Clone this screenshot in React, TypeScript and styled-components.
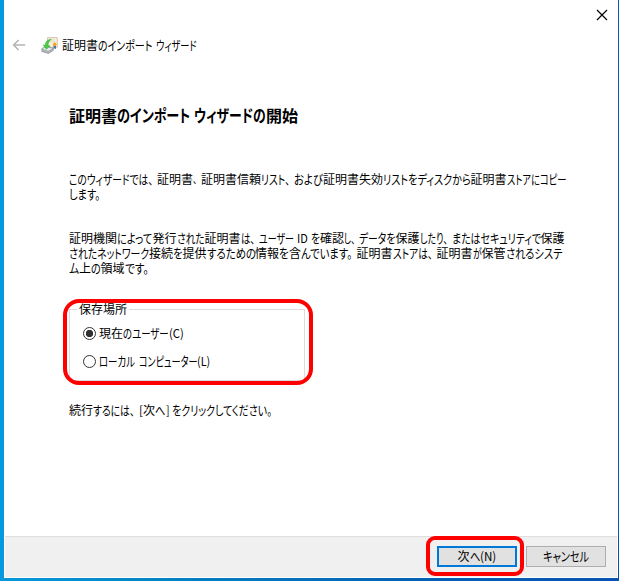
import React, { useLayoutEffect, useRef, useState } from 'react';
import styled, { createGlobalStyle } from 'styled-components';

const GlobalStyle = createGlobalStyle`
  * { box-sizing: border-box; }
  html, body { margin: 0; padding: 0; overflow: hidden; }
  body {
    font-family: "Noto Sans CJK JP", "Noto Sans", sans-serif;
    font-size: 12px;
    line-height: 15px;
    color: #000;
    font-feature-settings: "palt" 1;
  }
`;

const Desktop = styled.div`
  width: 619px;
  height: 581px;
  padding: 0 1px 3px 4px;
  background: linear-gradient(90deg, #0699dd 0%, #0488c8 20%, #0563b4 65%, #0852b4 100%);
`;
const Window = styled.main`
  height: 578px;
  display: flex;
  flex-direction: column;
  background: #fff;
`;
const TitleBar = styled.header`
  position: relative;
  display: flex;
  align-items: center;
  height: 54px;
  padding: 36px 0 0 8px;
`;
const CloseButton = styled.button`
  position: absolute;
  top: 9px;
  right: 10px;
  width: 12px;
  height: 12px;
  padding: 0;
  border: 0;
  background: none;
  svg { display: block; }
`;
const BackIcon = styled.svg`
  width: 14px;
  height: 14px;
  margin-right: 15px;
`;
const CertIcon = styled.svg`
  width: 17px;
  height: 17px;
  margin-right: 4px;
`;
const Content = styled.section`
  flex: 1;
  padding: 0 0 0 65px;
`;
const Heading = styled.h1`
  margin: 51px 0 0;
  height: 22px;
  font-size: 16px;
  line-height: 22px;
  font-weight: 700;
`;
const Paragraph = styled.div<{ $gap: number }>`
  margin-top: ${p => p.$gap}px;
`;
const Line = styled.div`
  display: flex;
  white-space: pre;
  margin: -1px 0 1px;
`;
const RunBox = styled.span<{ $w: number }>`
  flex: none;
  display: block;
  width: ${p => p.$w}px;
  height: 1.25em;
  white-space: pre;
`;
const RunInner = styled.span<{ $kana: boolean }>`
  display: inline-block;
  vertical-align: baseline;
  font-size: ${p => (p.$kana ? '1.07em' : '1em')};
  transform-origin: 0 50%;
`;
const GroupBox = styled.fieldset`
  position: relative;
  width: 236px;
  height: 72px;
  margin: 34px 0 0;
  padding: 16px 0 0 14px;
  border: 1px solid #dcdcdc;
  min-width: 0;
`;
const GroupLabel = styled.div`
  position: absolute;
  top: -8px;
  left: 7px;
  padding: 0 2px;
  background: #fff;
`;
const RadioRow = styled.label`
  display: flex;
  align-items: center;
  height: 15px;
  margin-bottom: 13px;
`;
const RadioMark = styled.span<{ $checked?: boolean }>`
  width: 13px;
  height: 13px;
  margin: 0 3px 0 -1px;
  border: 1px solid #333;
  border-radius: 50%;
  background: ${p => (p.$checked ? 'radial-gradient(circle, #303030 0 3.4px, #fff 4px)' : '#fff')};
`;
const Highlight = styled.div<{ $x: number; $y: number; $w: number; $h: number; $r: number }>`
  position: absolute;
  left: ${p => p.$x}px;
  top: ${p => p.$y}px;
  width: ${p => p.$w}px;
  height: ${p => p.$h}px;
  border: 4px solid #f00;
  border-radius: ${p => p.$r}px;
  pointer-events: none;
`;
const Footer = styled.footer`
  position: relative;
  display: flex;
  justify-content: flex-end;
  gap: 9px;
  height: 41px;
  margin: 0 1px 1px;
  padding: 9px 11px 0 0;
  border-top: 1px solid #dfdfdf;
  background: #f0f0f0;
`;
const PushButton = styled.button<{ $primary?: boolean }>`
  display: flex;
  justify-content: center;
  align-items: center;
  width: 80px;
  height: 21px;
  padding: 0;
  font: inherit;
  color: #000;
  border: ${p => (p.$primary ? '2px solid #0078d7' : '1px solid #adadad')};
  background: #e1e1e1;
`;

type Segment = [text: string, width: number];

const PUNCTUATION_GAP = 4;

// Condenses or widens a run of glyphs to a fixed advance width.
// A run that ends in a comma or full stop keeps a small gap after it.
function Run({ text, width }: { text: string; width: number }) {
  const ref = useRef<HTMLSpanElement>(null);
  const [scale, setScale] = useState(1);
  const inkWidth = /[、。]$/.test(text) ? width - PUNCTUATION_GAP : width;
  useLayoutEffect(() => {
    if (ref.current) setScale(inkWidth / ref.current.offsetWidth);
  }, [text, inkWidth]);
  return (
    <RunBox $w={width}>
      <RunInner ref={ref} $kana={/^[\u3041-\u30ff]/.test(text)} style={{ transform: `scaleX(${scale})` }}>
        {text}
      </RunInner>
    </RunBox>
  );
}

function TextLine({ segments }: { segments: Segment[] }) {
  return (
    <Line>
      {segments.map(([text, width], i) => <Run key={i} text={text} width={width} />)}
    </Line>
  );
}

const intro: Segment[][] = [
  [['このウィザードでは、', 88], ['証明書', 36], ['、', 8], ['証明書信頼', 60], ['リスト、', 33], ['および', 29],
    ['証明書失効', 60], ['リストをディスクから', 87.5], ['証明書', 36], ['ストアにコピー', 59]],
  [['します。', 35]],
];
const details: Segment[][] = [
  [['証明機関', 48], ['によって', 35.5], ['発行', 24], ['された', 28], ['証明書', 36], ['は、', 18], ['ユーザー', 35],
    [' ', 3.5], ['ID', 11], [' ', 3], ['を', 9], ['確認', 24], ['し、', 15], ['データを', 36.5], ['保護', 24],
    ['したり、', 32], ['またはセキュリティで', 89], ['保護', 24]],
  [['されたネットワーク', 80], ['接続', 24], ['を', 9.5], ['提供', 24], ['するための', 48.5], ['情報', 24], ['を', 10],
    ['含', 12], ['んでいます。', 55.5], ['証明書', 36], ['ストアは、', 44], ['証明書', 36], ['が', 9], ['保管', 24], ['されるシステ', 56.5]],
  [['ム', 10], ['上', 12], ['の', 9.5], ['領域', 24], ['です。', 28]],
];

export default function App() {
  return (
    <>
      <GlobalStyle />
      <Desktop>
        <Window>
          <TitleBar>
            <BackIcon viewBox="0 0 14 14" fill="none" stroke="#b4b4b4" strokeWidth="1.5">
              <path d="M13.2 7H1.6M6.6 2 1.6 7l5 5" />
            </BackIcon>
            <CertIcon viewBox="0 0 17 17">
              <path d="M6.5.7h9.8v9.6H6.5z" fill="#f7f1df" stroke="#d2bb9c" strokeWidth=".9" />
              <path d="M8.2 3h6M9 4.8h5" stroke="#ddd6ca" strokeWidth=".8" />
              <path d="M12.5 8.3v4l1.2-1 1.3 1v-4z" fill="#3b75c4" />
              <circle cx="13.7" cy="7.4" r="1.8" fill="#f3a51d" />
              <path d="m.8 11.6 4.4-2.3 7.2 1.9v2.2l-5 3.1-6.6-2z" fill="#aeb2b5" stroke="#858a8e" strokeWidth=".6" />
              <path d="m1.7 11.8 3.7-1.7 5.7 1.4-3.9 2.2z" fill="#e9ecec" />
              <path d="M10.2 2.3C6.7 2.6 4.4 4.8 4.4 8H2.2l3.2 4.2L9.2 9 7 8.6c0-2.2 1-4.3 3.2-6.3z" fill="#4ccc46" stroke="#32a939" strokeWidth=".5" />
            </CertIcon>
            <TextLine segments={[['証明書', 36], ['のインポート', 54.5], [' ', 3], ['ウィザード', 41]]} />
            <CloseButton aria-label="閉じる">
              <svg width="12" height="12" viewBox="0 0 12 12" stroke="#000" strokeWidth="1.2">
                <path d="m1 1 10 10M11 1 1 11" />
              </svg>
            </CloseButton>
          </TitleBar>
          <Content>
            <Heading>
              <TextLine segments={[['証明書', 48], ['のインポート', 73], [' ', 4], ['ウィザードの', 72], ['開始', 32]]} />
            </Heading>
            <Paragraph $gap={46}>
              {intro.map((line, i) => <TextLine key={i} segments={line} />)}
            </Paragraph>
            <Paragraph $gap={30}>
              {details.map((line, i) => <TextLine key={i} segments={line} />)}
            </Paragraph>
            <GroupBox>
              <GroupLabel><TextLine segments={[['保存場所', 48]]} /></GroupLabel>
              <RadioRow>
                <RadioMark $checked />
                <TextLine segments={[['現在', 24], ['のユーザー', 45.5], ['(C)', 15]]} />
              </RadioRow>
              <RadioRow>
                <RadioMark />
                <TextLine segments={[['ローカル', 36], [' ', 3.5], ['コンピューター', 58.5], ['(L)', 13.5]]} />
              </RadioRow>
              <Highlight $x={-7} $y={-11} $w={250} $h={86} $r={16} />
            </GroupBox>
            <Paragraph $gap={22}>
              <TextLine segments={[['続行', 24], ['するには、', 46], ['[', 4], ['次', 12], ['へ', 10.5], [']', 3.5], [' ', 3], ['をクリックしてください。', 104]]} />
            </Paragraph>
          </Content>
          <Footer>
            <PushButton $primary><TextLine segments={[['次', 12], ['へ', 10.5], ['(N)', 16.5]]} /></PushButton>
            <PushButton><TextLine segments={[['キャンセル', 46]]} /></PushButton>
            <Highlight $x={421} $y={-1} $w={98} $h={40} $r={9} />
          </Footer>
        </Window>
      </Desktop>
    </>
  );
}
